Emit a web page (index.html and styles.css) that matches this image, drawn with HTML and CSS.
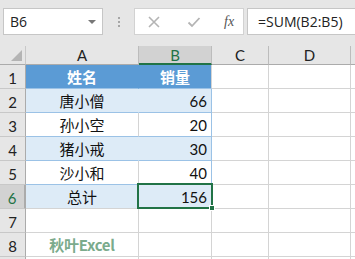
FILE: index.html
```html
<!DOCTYPE html>
<html>
<head>
<meta charset="utf-8">
<link rel="stylesheet" href="styles.css">
</head>
<body>
<div class="app">
  <div class="toolbar">
    <div class="namebox">
      <span class="name">B6</span>
      <span class="caret"></span>
    </div>
    <div class="dots"><i></i><i></i><i></i></div>
    <div class="btnbox">
      <svg class="ico" width="14" height="14" viewBox="0 0 14 14"><path d="M2 2 L12 12 M12 2 L2 12" stroke="#b4b4b4" stroke-width="1.6" fill="none"/></svg>
      <svg class="ico" width="14" height="14" viewBox="0 0 14 14"><path d="M1.5 7.5 L5 11 L12.5 3" stroke="#b4b4b4" stroke-width="1.8" fill="none"/></svg>
      <span class="fx">fx</span>
    </div>
    <div class="formula">=SUM(B2:B5)</div>
  </div>
  <div class="sheet">
    <div class="hd corner"><span class="tri"></span></div>
    <div class="hd col">A</div>
    <div class="hd col sel-col">B</div>
    <div class="hd col">C</div>
    <div class="hd col">D</div>
    <div class="hd col last"></div>

    <div class="hd row">1</div>
    <div class="c tb-head">姓名</div>
    <div class="c tb-head">销量</div>
    <div class="c"></div><div class="c"></div><div class="c last"></div>

    <div class="hd row">2</div>
    <div class="c band name">唐小僧</div>
    <div class="c band num">66</div>
    <div class="c"></div><div class="c"></div><div class="c last"></div>

    <div class="hd row">3</div>
    <div class="c plain name">孙小空</div>
    <div class="c plain num">20</div>
    <div class="c"></div><div class="c"></div><div class="c last"></div>

    <div class="hd row">4</div>
    <div class="c band name">猪小戒</div>
    <div class="c band num">30</div>
    <div class="c"></div><div class="c"></div><div class="c last"></div>

    <div class="hd row">5</div>
    <div class="c plain name">沙小和</div>
    <div class="c plain num">40</div>
    <div class="c"></div><div class="c"></div><div class="c last"></div>

    <div class="hd row sel-row">6</div>
    <div class="c band name total">总计</div>
    <div class="c band num active">156<span class="handle"></span></div>
    <div class="c"></div><div class="c"></div><div class="c last"></div>

    <div class="hd row">7</div>
    <div class="c"></div><div class="c"></div><div class="c"></div><div class="c"></div><div class="c last"></div>

    <div class="hd row">8</div>
    <div class="c brand">秋叶Excel</div>
    <div class="c"></div><div class="c"></div><div class="c"></div><div class="c last"></div>

    <div class="hd row"></div>
    <div class="c"></div><div class="c"></div><div class="c"></div><div class="c"></div><div class="c last"></div>
  </div>
</div>
</body>
</html>
```
FILE: styles.css
```css
* { box-sizing: border-box; }
html, body { margin: 0; padding: 0; }
body {
  width: 355px;
  height: 259px;
  overflow: hidden;
  background: #e6e6e6;
  font-family: "Noto Sans CJK SC", "Noto Sans", sans-serif;
}
.app { display: flex; flex-direction: column; }

.toolbar {
  display: flex;
  align-items: stretch;
  height: 46px;
  padding: 8px 0 11px 3px;
  background: #e6e6e6;
}
.namebox {
  width: 100px;
  background: #fff;
  border: 1px solid #c6c6c6;
  display: flex;
  align-items: center;
  justify-content: space-between;
  padding: 0 6px 0 6px;
}
.name {
  font-family: "Open Sans", "Liberation Sans", sans-serif;
  font-size: 14px;
  color: #222;
}
.caret {
  width: 0; height: 0;
  border-left: 4px solid transparent;
  border-right: 4px solid transparent;
  border-top: 4px solid #777;
}
.dots {
  width: 31px;
  display: flex;
  flex-direction: column;
  align-items: center;
  justify-content: center;
  gap: 2px;
}
.dots i {
  display: block;
  width: 2px; height: 2px;
  background: #a6a6a6;
}
.btnbox {
  width: 110px;
  background: #fff;
  border: 1px solid #d2d2d2;
  display: flex;
  align-items: center;
  padding-left: 12px;
  gap: 26px;
}
.fx {
  font-family: "Liberation Serif", serif;
  font-style: italic;
  font-size: 14px;
  color: #555;
  margin-left: -3px;
}
.formula {
  flex: 1;
  margin-left: 3px;
  background: #fff;
  border: 1px solid #c6c6c6;
  border-right: none;
  display: flex;
  align-items: center;
  padding-left: 10px;
  font-family: "Open Sans", "Liberation Sans", sans-serif;
  font-size: 14px;
  color: #222;
}

.sheet {
  display: grid;
  grid-template-columns: 26px 113px 73px 57px 82px 1fr;
  grid-template-rows: 19px repeat(9, 24px);
  background: #fff;
}
.hd {
  background: #e6e6e6;
  border-right: 1px solid #ababab;
  border-bottom: 1px solid #ababab;
  display: flex;
  align-items: center;
  justify-content: center;
  font-family: "Lato", "Liberation Sans", sans-serif;
  font-size: 15px;
  color: #222;
}
.hd.col { border-right-color: #bcbcbc; }
.hd.col.last { border-right: none; }
.hd.row { border-right-color: #ababab; border-bottom-color: #c8c8c8; padding-top: 3px; }
.corner { position: relative; border-right-color: #c8c8c8; }
.tri {
  position: absolute;
  right: 3px; bottom: 3px;
  width: 0; height: 0;
  border-left: 11px solid transparent;
  border-bottom: 11px solid #b4b4b4;
}
.sel-col {
  background: #d2d2d2;
  border-bottom: 2px solid #217346;
  color: #217346;
}
.sel-row {
  background: #d2d2d2;
  border-right: 2px solid #217346;
  color: #217346;
}

.c {
  border-right: 1px solid #d4d4d4;
  border-bottom: 1px solid #d4d4d4;
  display: flex;
  align-items: center;
  font-family: "Noto Sans CJK SC", sans-serif;
  font-size: 15px;
  color: #111;
}
.c.last { border-right: none; }
.tb-head {
  background: #5b9bd5;
  color: #fff;
  font-weight: bold;
  justify-content: center;
  border-right-color: #5b9bd5;
  border-bottom-color: #9bc2e6;
}
.tb-head + .tb-head { border-right-color: #d4d4d4; }
.band { background: #ddebf7; border-bottom-color: #9bc2e6; border-right-color: #ddebf7; }
.plain { border-bottom-color: #9bc2e6; }
.name { justify-content: center; }
.num {
  justify-content: flex-end;
  padding-right: 4px;
  font-family: "Lato", "Liberation Sans", sans-serif;
  font-size: 15px;
  border-right-color: #9bc2e6;
}
.total, .active { border-bottom-color: #d4d4d4; }
.active { position: relative; }
.active::after {
  content: "";
  position: absolute;
  left: -2px; top: -2px; right: -2px; bottom: -1px;
  border: 2px solid #217346;
}
.handle {
  position: absolute;
  right: -4px; bottom: -3px;
  width: 6px; height: 6px;
  background: #217346;
  border: 1px solid #fff;
  z-index: 2;
}
.brand {
  justify-content: center;
  font-weight: bold;
  color: #7bab8c;
  font-size: 15px;
  font-family: "Noto Sans CJK SC", "Open Sans", sans-serif;
  letter-spacing: -0.3px;
}
```
